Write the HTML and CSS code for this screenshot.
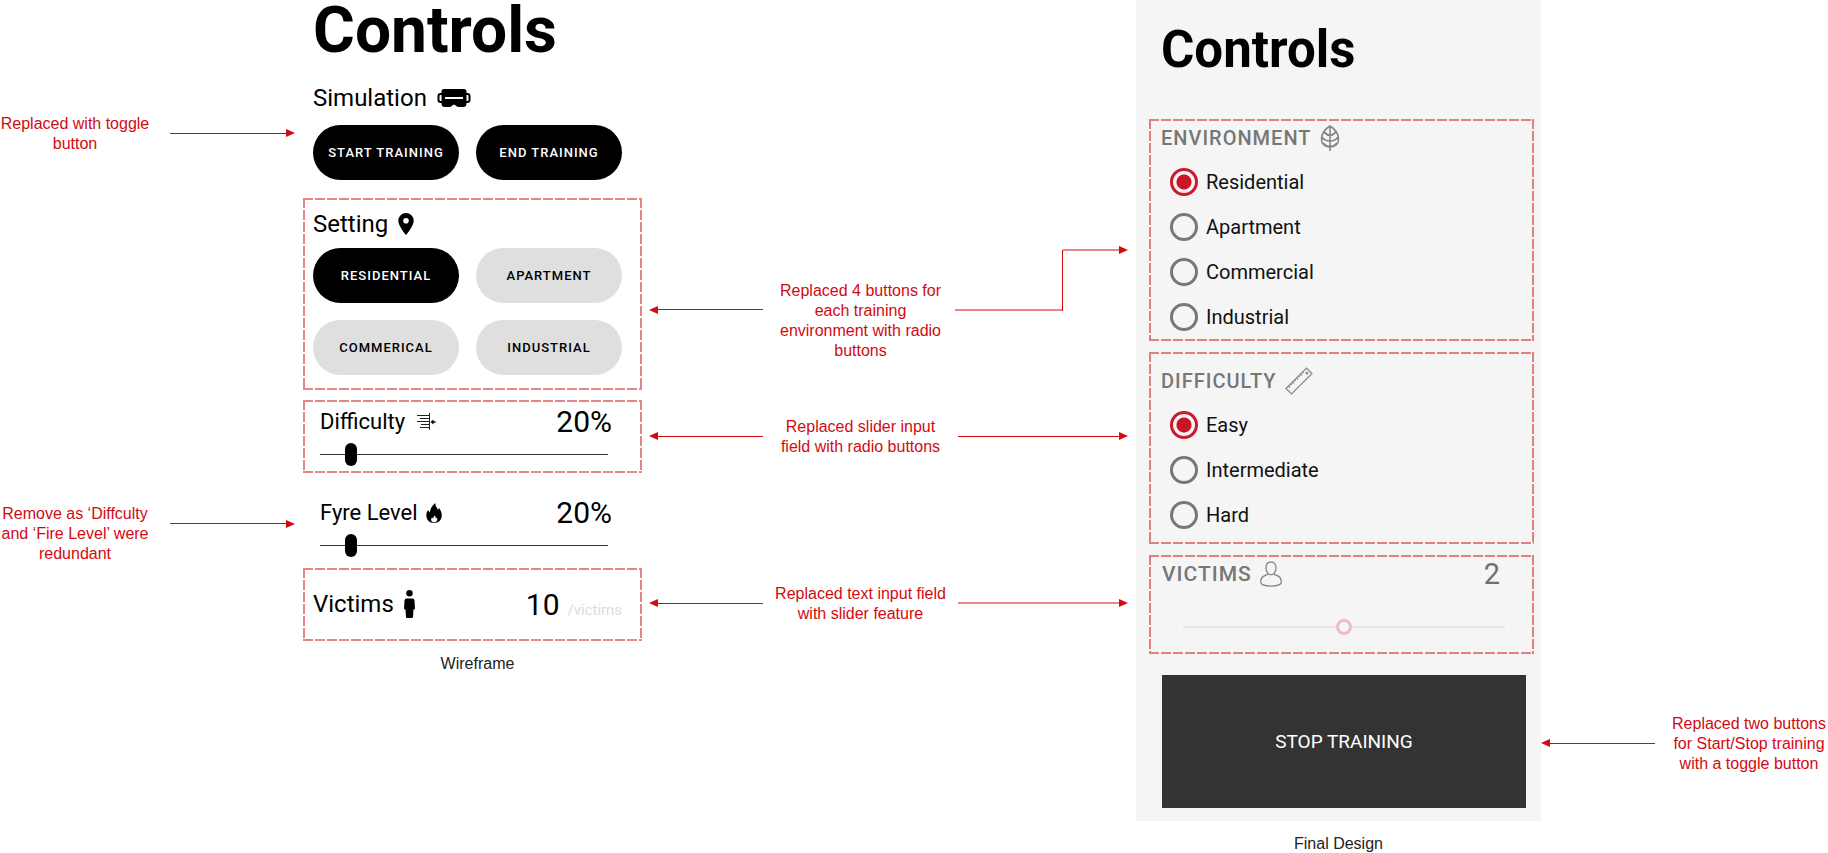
FILE: index.html
```html
<!DOCTYPE html>
<html lang="en">
<head>
<meta charset="utf-8">
<title>Controls: wireframe and final design</title>
<link rel="stylesheet" href="styles.css">
</head>
<body>
<main class="board">
  <aside class="notes notes-left">
    <div class="note">
      <p class="note-text">Replaced with toggle<br>button</p>
      <span class="arrow"></span>
    </div>
    <div class="note note-top">
      <p class="note-text">Remove as ‘Diffculty<br>and ‘Fire Level’ were<br>redundant</p>
      <span class="arrow"></span>
    </div>
  </aside>

  <section class="wireframe">
    <h1 class="wf-title">Controls</h1>
    <div class="wf-group">
      <h2 class="wf-label">Simulation
        <svg class="icon-goggles" width="34" height="18" viewBox="0 0 34 18"><path d="M6 5H3.500Q1.500 5 1.500 7v4q0 2 2 2H6M28 5h2.500q2 0 2 2v4q0 2-2 2H28" fill="none" stroke="#000" stroke-width="2"/><path d="M7 0h20q2.500 0 2.500 2.500v12Q29.500 18 26 18h-4q-2 0-3-1.200l-2-1.300-2 1.300Q14 18 12 18H8q-3.500 0-3.500-3.500v-12Q4.500 0 7 0z"/><path d="M8 9h18" stroke="#fff" stroke-width="2"/></svg>
      </h2>
      <div class="pills">
        <button class="pill pill-on" type="button">START TRAINING</button>
        <button class="pill pill-on" type="button">END TRAINING</button>
      </div>
    </div>
    <div class="dashed wf-setting">
      <h2 class="wf-label">Setting
        <svg class="icon-pin" width="16" height="22" viewBox="0 0 16 22"><path fill-rule="evenodd" d="M8 0a7.700 7.700 0 0 1 7.700 7.700C15.700 13 8 22 8 22S.300 13 .300 7.700A7.700 7.700 0 0 1 8 0zm0 5a2.800 2.800 0 1 0 0 5.600A2.800 2.800 0 0 0 8 5z"/></svg>
      </h2>
      <div class="pills">
        <button class="pill pill-on" type="button">RESIDENTIAL</button>
        <button class="pill" type="button">APARTMENT</button>
        <button class="pill" type="button">COMMERICAL</button>
        <button class="pill" type="button">INDUSTRIAL</button>
      </div>
    </div>
    <div class="dashed wf-level">
      <div class="wf-row">
        <label class="wf-label wf-label-small" for="wf-difficulty">Difficulty
          <svg class="icon-lines" width="19" height="18" viewBox="0 0 19 18"><path d="M0 2.500h12M3 5.500h9M0 8.500h12M4 11.500h8M3 14.500h9" stroke="#222" stroke-width="1.200"/><path d="M12.500 0v18" stroke="#222" stroke-dasharray="2 1"/><path d="M12.500 2v13" stroke="#222"/><path d="M18.500 9H15" stroke="#000" stroke-width="1.500"/><path d="M13.500 9l3-2.500v5z"/></svg>
        </label>
        <output class="wf-value">20%</output>
      </div>
      <input class="wf-slider" id="wf-difficulty" type="range" value="9">
    </div>
    <div class="wf-level wf-fyre">
      <div class="wf-row">
        <label class="wf-label wf-label-small" for="wf-fyre">Fyre Level
          <svg class="icon-flame" width="16" height="20" viewBox="0 0 16 20"><path d="M9.500 0c-.300 2 .300 3.300 1.500 4.800L12 7l1.200-2c1.700 2.500 2.600 5 2.600 7.500 0 4.500-3.300 7.500-7.800 7.500S.300 17 .300 12.500C.300 10.300 1 8.500 2 7l1.700 2.500C4.500 6.500 5 3 9.500 0z"/><path d="M8.400 12.500c-.300 1.400-1.200 1.600-1.300 3-.6-.2-.9-.7-1-1.300-2 2.300-.9 5 1.900 5s4.200-2.300 2.700-4.500l-.9.900c.2-1.300-.5-2.500-1.400-3.100z" fill="#fff"/></svg>
        </label>
        <output class="wf-value">20%</output>
      </div>
      <input class="wf-slider" id="wf-fyre" type="range" value="9">
    </div>
    <div class="dashed wf-victims">
      <label class="wf-label" for="wf-victims">Victims
        <svg class="icon-person" width="11" height="28" viewBox="0 0 11 28"><circle cx="5.500" cy="3.200" r="3.200"/><path d="M2.500 8.500h6q1.800 0 2 2l.5 8q0 .8-1.500 1L9 27q-.1 1-1 1H3q-.9 0-1-1l-.5-7.500q-1.500-.2-1.500-1l.5-8q.2-2 2-2z"/></svg>
      </label>
      <span class="wf-count"><input class="wf-input" id="wf-victims" type="text" value="10"><span class="wf-unit">/victims</span></span>
    </div>
    <p class="caption">Wireframe</p>
  </section>

  <aside class="notes notes-middle">
    <div class="link link-bent">
      <span class="arrow arrow-left"></span>
      <p class="note-text">Replaced 4 buttons for<br>each training<br>environment with radio<br>buttons</p>
      <span class="elbow"><span class="elbow-run"></span><span class="elbow-rise"><span class="arrow arrow-soft"></span></span></span>
    </div>
    <div class="link">
      <span class="arrow arrow-left"></span>
      <p class="note-text">Replaced slider input<br>field with radio buttons</p>
      <span class="arrow"></span>
    </div>
    <div class="link link-last">
      <span class="arrow arrow-left"></span>
      <p class="note-text">Replaced text input field<br>with slider feature</p>
      <span class="arrow arrow-soft"></span>
    </div>
  </aside>

  <section class="final">
    <div class="panel">
      <h1 class="fd-title">Controls</h1>
      <fieldset class="dashed fd-box fd-environment" aria-labelledby="environment-head">
        <h2 class="fd-head" id="environment-head">ENVIRONMENT
          <svg class="icon-leaf" width="20" height="26" viewBox="0 0 20 26" fill="none" stroke="#868686" stroke-width="1.600"><path d="M10 1C5 4 1.500 9 1.500 14c0 5 3.500 8 8.500 8s8.500-3 8.500-8c0-5-3.500-10-8.500-13zM10 1v25M10 10.500Q6 10 4 6.500M10 10.500q4-.5 6-4M10 16q-5.500 0-8-4M10 16q5.500 0 8-4M10 21.500q-4.500-.5-7-3.500M10 21.500q4.500-.5 7-3.500"/></svg>
        </h2>
        <label class="choice"><input class="radio" type="radio" name="environment" checked>Residential</label>
        <label class="choice"><input class="radio" type="radio" name="environment">Apartment</label>
        <label class="choice"><input class="radio" type="radio" name="environment">Commercial</label>
        <label class="choice"><input class="radio" type="radio" name="environment">Industrial</label>
      </fieldset>
      <fieldset class="dashed fd-box fd-difficulty" aria-labelledby="difficulty-head">
        <h2 class="fd-head" id="difficulty-head">DIFFICULTY
          <svg class="icon-ruler" width="28" height="28" viewBox="0 0 28 28" fill="none" stroke="#888" stroke-width="1.200"><path d="M1 21.500L21.500 1 27 6.500 6.500 27z"/><circle cx="22" cy="6" r="1"/><path d="M3.500 19l1.500 1.500M5.500 17l1 1M7.500 15L9 16.500M9.500 13l1 1M11.500 11l1.500 1.500M13.500 9l1 1M15.500 7L17 8.500M17.500 5l1 1"/></svg>
        </h2>
        <label class="choice"><input class="radio" type="radio" name="difficulty" checked>Easy</label>
        <label class="choice"><input class="radio" type="radio" name="difficulty">Intermediate</label>
        <label class="choice"><input class="radio" type="radio" name="difficulty">Hard</label>
      </fieldset>
      <div class="dashed fd-box fd-victims">
        <div class="fd-row">
          <label class="fd-head" for="fd-victims">VICTIMS
            <svg class="icon-user" width="22" height="26" viewBox="0 0 22 26" fill="none" stroke="#868686" stroke-width="1.300"><path d="M11 1C7.700 1 6 3.500 6 6.800c0 3.700 2.200 7 5 7s5-3.300 5-7C16 3.500 14.300 1 11 1zM8 13c-1.500 1.500-6 1.500-7 5.500-.8 3.500-.2 4.500 1.500 5.200 4.500 2 12.500 2 17 0 1.700-.7 2.300-1.700 1.500-5.200-1-4-5.500-4-7-5.500"/></svg>
          </label>
          <output class="fd-value">2</output>
        </div>
        <input class="fd-slider" id="fd-victims" type="range" value="50">
      </div>
      <button class="stop" type="button">STOP TRAINING</button>
    </div>
    <p class="caption">Final Design</p>
  </section>

  <aside class="notes notes-right">
    <div class="note">
      <span class="arrow arrow-left"></span>
      <p class="note-text">Replaced two buttons<br>for Start/Stop training<br>with a toggle button</p>
    </div>
  </aside>
</main>
</body>
</html>
```
FILE: styles.css
```css
* { box-sizing: border-box; }
body {
  margin: 0;
  background: #fff;
  color: #000;
  font-family: Roboto, "Liberation Sans", sans-serif;
}
h1, h2, p { margin: 0; }
button, input { font-family: inherit; margin: 0; }
svg { flex: none; }

.board {
  display: grid;
  grid-template-columns: 303fr 339fr 494fr 405fr 287fr;
}

/* Frames drawn with one dashed strip on each side */
.dashed {
  --dash: #e68585;
  background:
    repeating-linear-gradient(90deg, var(--dash) 0 10px, transparent 10px 12px) top / 100% 2px no-repeat,
    repeating-linear-gradient(90deg, var(--dash) 0 10px, transparent 10px 12px) bottom / 100% 2px no-repeat,
    repeating-linear-gradient(180deg, var(--dash) 0 10px, transparent 10px 12px) left / 2px 100% no-repeat,
    repeating-linear-gradient(180deg, var(--dash) 0 10px, transparent 10px 12px) right / 2px 100% no-repeat;
}

/* Notes and arrows */
.note-text, .caption {
  font-family: "Liberation Sans", Arial, sans-serif;
  font-size: 16px;
  line-height: 20px;
  text-align: center;
  white-space: nowrap;
}
.note-text { color: #d20a11; }
.caption { color: #222; line-height: 18px; margin-top: 14px; }
.arrow {
  display: flex;
  flex: 1;
  align-items: center;
  height: 9px;
  margin-bottom: 2px;
}
.arrow::before {
  content: "";
  flex: 1;
  height: 1px;
  background: #d20a11;
}
.arrow::after {
  content: "";
  border-left: 9px solid #d20a11;
  border-top: 4px solid transparent;
  border-bottom: 4px solid transparent;
}
.arrow-left { flex-direction: row-reverse; }
.arrow-left::after {
  border-left: 0;
  border-right: 9px solid #d20a11;
}
.arrow-soft::before { height: 2px; background: #e98585; }

.note { display: flex; align-items: center; }
.notes-left { padding: 114px 8px 0 0; }
.notes-left .note { gap: 20px; }
.notes-left .note-text { width: 150px; }
.note-top { align-items: flex-start; margin-top: 350px; }
.note-top .arrow { margin-top: 15px; }
.notes-right { padding-top: 714px; }
.notes-right .note { gap: 15px; }
.notes-right .note-text { width: 158px; }

.notes-middle { padding: 246px 8px 0 7px; }
.link {
  display: grid;
  grid-template-columns: 114fr 195fr 170fr;
  align-items: center;
  margin-top: 56px;
}
.link-bent { align-items: start; margin-top: 0; }
.link-bent .note-text { padding-top: 35px; }
.link-bent .arrow-left { margin-top: 59px; }
.link-last { margin-top: 127px; }
.elbow { display: flex; height: 65px; margin-left: -3px; }
.elbow-run { flex: 108; border-bottom: 2px solid #e98585; }
.elbow-rise { flex: 65; border-left: 1px solid #d20a11; margin-top: 4px; }
.elbow-rise .arrow { margin-top: -5px; }

/* Wireframe */
.wf-title {
  padding-left: 10px;
  font-size: 64px;
  line-height: 62px;
}
.wf-group { padding: 21px 20px 0 10px; }
.wf-label {
  display: flex;
  align-items: center;
  gap: 10px;
  font-size: 24px;
  font-weight: 400;
  line-height: 30px;
}
.wf-label-small { gap: 12px; font-size: 22px; }
.wf-fyre .wf-label { gap: 8px; }
.pills {
  display: grid;
  grid-template-columns: 1fr 1fr;
  gap: 17px;
  margin-top: 9px;
}
.wf-group .pills { margin-top: 12px; }
.pill {
  height: 55px;
  padding: 0;
  border: 0;
  border-radius: 28px;
  background: #dfdfdf;
  color: #000;
  font-size: 13px;
  font-weight: 500;
  letter-spacing: 1px;
}
.pill-on { background: #000; color: #fff; }
.wf-setting { margin-top: 18px; padding: 11px 20px 15px 10px; }
.wf-level { margin-top: 10px; padding: 4px 34px 7px 17px; }
.wf-fyre { margin-top: 18px; }
.wf-row { display: flex; justify-content: space-between; align-items: center; margin-right: -4px; }
.wf-value { font-size: 30px; line-height: 36px; }
.wf-slider, .fd-slider {
  -webkit-appearance: none;
  appearance: none;
  display: block;
  width: 100%;
  background: linear-gradient(#333, #333) center / 100% 1px no-repeat;
}
.wf-slider { height: 23px; margin-top: 3px; }
.wf-slider::-webkit-slider-thumb {
  -webkit-appearance: none;
  width: 12px;
  height: 23px;
  border-radius: 6px;
  background: #000;
}
.wf-victims {
  display: flex;
  justify-content: space-between;
  align-items: center;
  margin-top: 4px;
  padding: 18px 20px 19px 10px;
}
.wf-count { display: flex; align-items: baseline; gap: 8px; }
.wf-input {
  width: 36px;
  height: 36px;
  padding: 0;
  border: 0;
  background: none;
  font-size: 30px;
  text-align: right;
}
.wf-unit { color: #ddd; font-size: 15px; }
.wireframe .caption { margin-left: 10px; }

/* Final design */
.panel { padding: 20px 7px 13px 13px; background: #f5f5f5; }
.fd-title {
  padding-left: 12px;
  font-size: 51px;
  line-height: 60px;
}
.fd-box { border: 0; margin: 11px 0 0; min-width: 0; --dash: #e28080; }
.fd-environment { margin-top: 39px; padding: 5px 12px 2px; }
.fd-difficulty { padding: 15px 12px 7px; }
.fd-victims { padding: 5px 34px 19px 13px; }
.fd-head {
  display: flex;
  align-items: center;
  gap: 8px;
  height: 28px;
  margin-bottom: 7px;
  color: #777;
  font-size: 20px;
  font-weight: 500;
  letter-spacing: 1px;
}
.fd-row { display: flex; justify-content: space-between; align-items: center; }
.fd-row .fd-head { margin: 0; font-size: 21px; }
.fd-value { color: #707070; font-size: 29px; line-height: 28px; }
.choice {
  display: flex;
  align-items: center;
  gap: 8px;
  height: 45px;
  padding-left: 9px;
  color: #111;
  font-size: 20px;
}
.radio {
  -webkit-appearance: none;
  appearance: none;
  width: 28px;
  height: 28px;
  border: 3px solid #777;
  border-radius: 50%;
}
.radio:checked {
  border-color: #cb1a2d;
  background: radial-gradient(circle, #cb142a 7px, transparent 8px);
}
.fd-slider {
  width: auto;
  min-width: calc(100% + 5px - 21px);
  height: 16px;
  margin: 31px -5px 0 21px;
  background: linear-gradient(#e4e4e4, #e4e4e4) center / 100% 2px no-repeat;
}
.fd-slider::-webkit-slider-thumb {
  -webkit-appearance: none;
  width: 16px;
  height: 16px;
  border: 3px solid #ebbcc2;
  border-radius: 50%;
  background: #f5f5f5;
}
.stop {
  display: block;
  width: calc(100% - 21px);
  height: 133px;
  margin: 21px 8px 0 13px;
  border: 0;
  background: #333;
  color: #fff;
  font-size: 19px;
}
```
